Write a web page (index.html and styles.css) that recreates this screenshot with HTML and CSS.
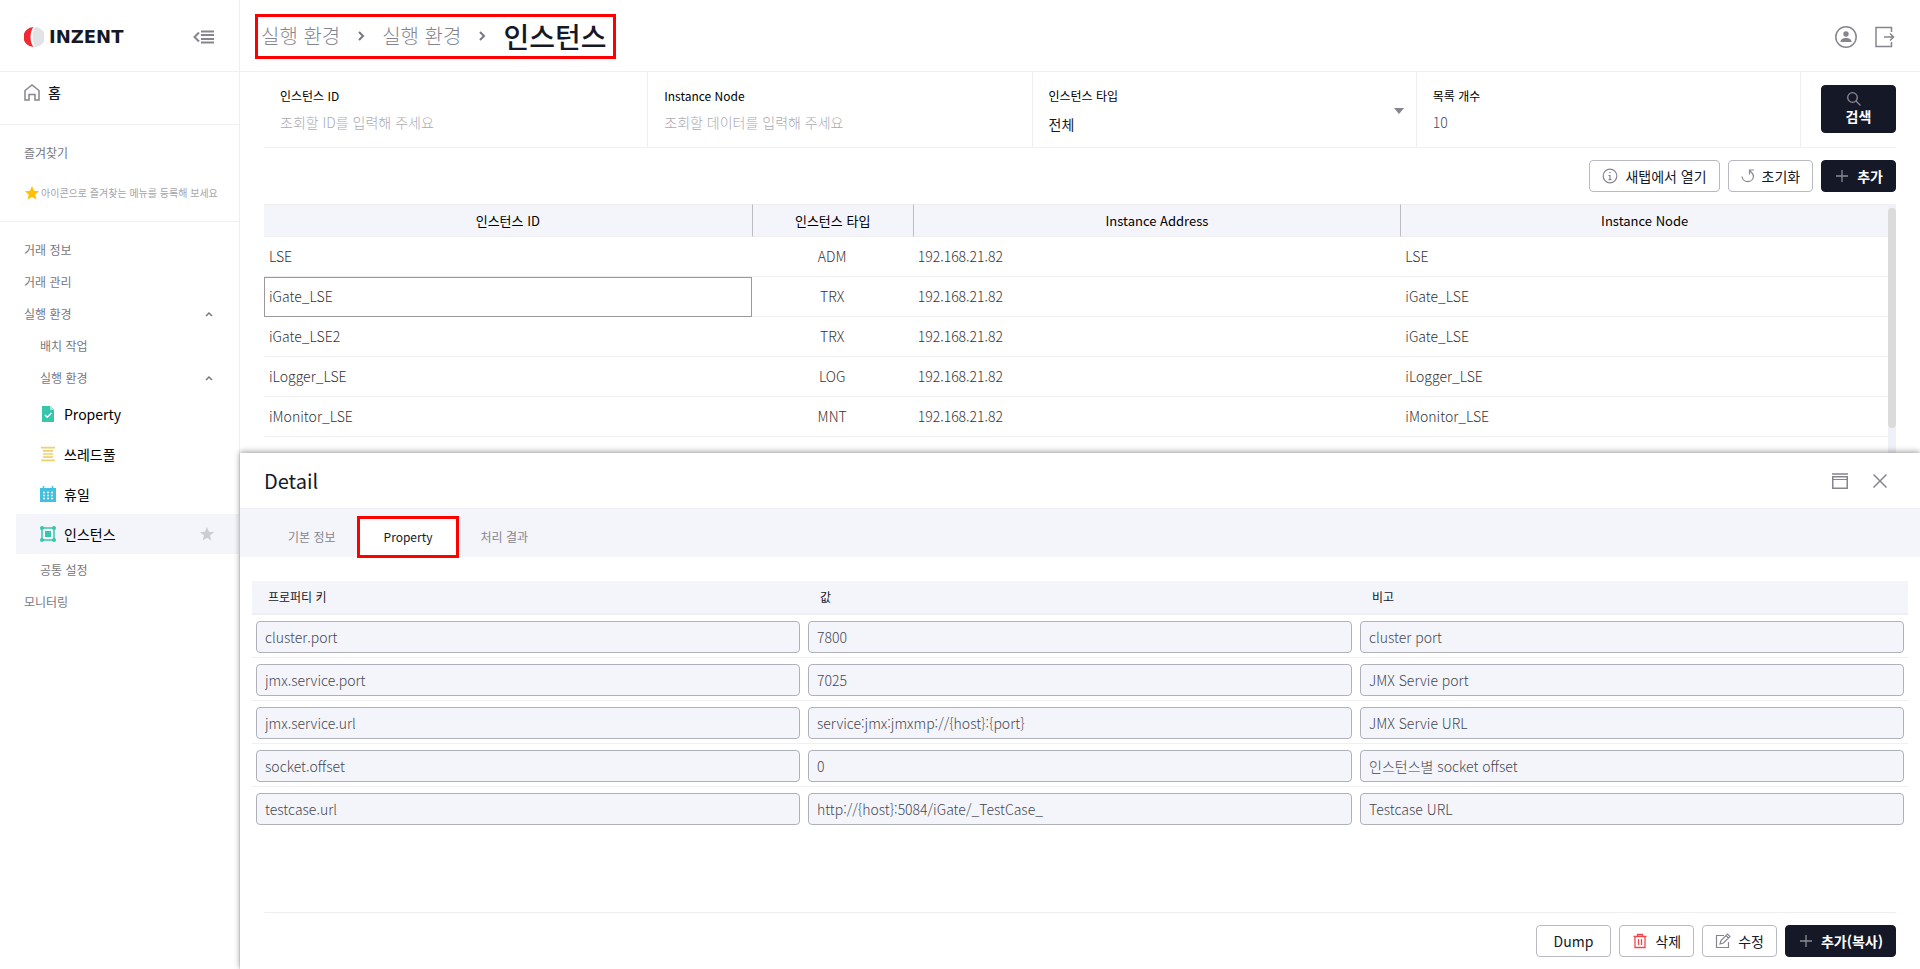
FILE: index.html
```html
<!DOCTYPE html>
<html lang="ko">
<head>
<meta charset="utf-8">
<title>인스턴스</title>
<link rel="stylesheet" href="styles.css">
</head>
<body>
<div class="app">
  <aside class="sidebar">
    <div class="brand">
      <a class="logo" href="#">
        <svg width="20" height="20" viewBox="0 0 20 20" aria-hidden="true"><path d="M11 0a10 10 0 0 1 0 20c-3-5-3-15 0-20z" fill="#e1e3e6"/><path d="M9.500 0a10 10 0 0 0 0 20C5.500 15 5.500 5 9.500 0z" fill="#ee2b34"/></svg>
        <span class="logo-text">INZENT</span>
      </a>
      <button class="icon-button" type="button" aria-label="메뉴 접기">
        <svg width="21" height="14" viewBox="0 0 21 14" fill="none" stroke="#85858f" stroke-width="2"><path d="M6 2.500L1.500 7 6 11.500M8 1.500h13M8 5h13M8 9h13M8 12.500h13"/></svg>
      </button>
    </div>
    <a class="home" href="#">
      <svg width="16" height="17" viewBox="0 0 16 17" fill="none" stroke="#85858f" stroke-width="1.500"><path d="M1 16V6.500L8 1l7 5.500V16h-4v-5.500H5V16z"/></svg>
      홈
    </a>
    <section class="favorites">
      <h2 class="favorites-title">즐겨찾기</h2>
      <p class="favorites-hint">
        <svg width="16" height="16" viewBox="0 0 16 16" fill="#ffc107"><path d="M8 1l2.100 4.700 5 .5-3.800 3.400 1.100 5L8 12.100l-4.400 2.500 1.100-5L.9 6.200l5-.5z"/></svg>
        아이콘으로 즐겨찾는 메뉴를 등록해 보세요
      </p>
    </section>
    <nav class="menu">
      <a class="menu-group" href="#">거래 정보</a>
      <a class="menu-group" href="#">거래 관리</a>
      <a class="menu-group" href="#">실행 환경
        <svg width="8" height="6" viewBox="0 0 8 6" fill="none" stroke="#777780" stroke-width="1.500"><path d="M1 5l3-3 3 3"/></svg>
      </a>
      <a class="menu-group nested" href="#">배치 작업</a>
      <a class="menu-group nested" href="#">실행 환경
        <svg width="8" height="6" viewBox="0 0 8 6" fill="none" stroke="#777780" stroke-width="1.500"><path d="M1 5l3-3 3 3"/></svg>
      </a>
      <a class="menu-item" href="#">
        <svg width="16" height="16" viewBox="0 0 16 16"><path d="M2 0h8l4 4v12H2z" fill="#37c5ab"/><path d="M10 0l4 4h-4z" fill="#a5e5d9"/><path d="M5 9l2.200 2.200L11.500 7" fill="none" stroke="#fff" stroke-width="1.400"/></svg>
        Property
      </a>
      <a class="menu-item" href="#">
        <svg width="16" height="16" viewBox="0 0 16 16" stroke="#f0cf6c" stroke-width="1.700"><path d="M1 1.700h14M3 4.900h10M3 8h10M3 11.100h10M1 14.300h14"/></svg>
        쓰레드풀
      </a>
      <a class="menu-item" href="#">
        <svg width="16" height="16" viewBox="0 0 16 16"><path d="M0 2h16v14H0z" fill="#41c1e0"/><path d="M3.500 0v4M12.500 0v4" stroke="#41c1e0" stroke-width="1.500"/><path d="M3 6.500h2M7 6.500h2M11 6.500h2M3 9.500h2M7 9.500h2M11 9.500h2M3 12.500h2M7 12.500h2M11 12.500h2" stroke="#fff" stroke-width="1.300"/></svg>
        휴일
      </a>
      <a class="menu-item active" href="#">
        <svg width="16" height="16" viewBox="0 0 16 16"><path d="M2 2h12v12H2z" fill="none" stroke="#37c5ab" stroke-width="1.500"/><path d="M5 5h6v6H5z" fill="#37c5ab"/><g fill="#37c5ab"><circle cx="2" cy="2" r="2"/><circle cx="14" cy="2" r="2"/><circle cx="2" cy="14" r="2"/><circle cx="14" cy="14" r="2"/></g></svg>
        인스턴스
        <svg class="star" width="14" height="14" viewBox="0 0 16 16" fill="#ccccd2"><path d="M8 0l2.200 5.500 5.800.4-4.500 3.800L13 15.500 8 12.300l-5 3.200 1.500-5.800L0 5.900l5.800-.4z"/></svg>
      </a>
      <a class="menu-group nested" href="#">공통 설정</a>
      <a class="menu-group" href="#">모니터링</a>
    </nav>
  </aside>

  <main class="main">
    <header class="topbar">
      <nav class="breadcrumb" aria-label="현재 위치">
        <span>실행 환경</span>
        <svg width="8" height="10" viewBox="0 0 8 10" fill="none" stroke="#777780" stroke-width="2"><path d="M2 1l4 4-4 4"/></svg>
        <span>실행 환경</span>
        <svg width="8" height="10" viewBox="0 0 8 10" fill="none" stroke="#777780" stroke-width="2"><path d="M2 1l4 4-4 4"/></svg>
        <h1>인스턴스</h1>
      </nav>
      <div class="account">
        <button class="icon-button" type="button" aria-label="사용자">
          <svg width="22" height="22" viewBox="0 0 22 22"><circle cx="11" cy="11" r="10.200" fill="none" stroke="#85858f" stroke-width="1.500"/><circle cx="11" cy="8" r="2.700" fill="#85858f"/><path d="M5.500 16c0-3 2.500-4 5.500-4s5.500 1 5.500 4z" fill="#85858f"/></svg>
        </button>
        <button class="icon-button" type="button" aria-label="로그아웃">
          <svg width="20" height="22" viewBox="0 0 20 22" fill="none" stroke="#85858f" stroke-width="1.500"><path d="M16.500 6V1.500H1v19h15.500V16M9 11h9.500M15 7.500l3.500 3.500-3.500 3.500"/></svg>
        </button>
      </div>
    </header>

    <form class="filters">
      <div class="field">
        <label for="f-id">인스턴스 ID</label>
        <input id="f-id" type="text" placeholder="조회할 ID를 입력해 주세요">
      </div>
      <div class="field">
        <label for="f-node">Instance Node</label>
        <input id="f-node" type="text" placeholder="조회할 데이터를 입력해 주세요">
      </div>
      <div class="field">
        <label for="f-type">인스턴스 타입</label>
        <select id="f-type"><option>전체</option></select>
        <svg class="caret" width="10" height="6" viewBox="0 0 10 6" fill="#85858f"><path d="M0 0h10L5 6z"/></svg>
      </div>
      <div class="field">
        <label for="f-count">목록 개수</label>
        <input id="f-count" type="text" value="10">
      </div>
      <div class="search">
        <button class="button dark search-button" type="button">
          <span class="search-stack">
            <svg width="15" height="14" viewBox="0 0 15 14" fill="none" stroke="#8a8c95" stroke-width="1.300"><circle cx="6.500" cy="5.500" r="4.800"/><path d="M10 9l4.500 4.500"/></svg>
            검색
          </span>
        </button>
      </div>
    </form>

    <div class="toolbar">
      <button class="button" type="button">
        <svg width="16" height="16" viewBox="0 0 16 16" fill="none" stroke="#85858f" stroke-width="1.200"><circle cx="8" cy="8" r="6.800"/><path d="M8 7v5M6.500 7.500H8M6.500 11.700h3M7.200 4.500h1.500"/></svg>
        새탭에서 열기
      </button>
      <button class="button" type="button">
        <svg width="14" height="16" viewBox="0 0 14 16" fill="none" stroke="#85858f" stroke-width="1.200"><path d="M1 8.500a5.800 5.800 0 0 0 11.500 0c0-2.500-1.500-4-3.500-5.500M13 2H8.500v4.500"/></svg>
        초기화
      </button>
      <button class="button dark" type="button">
        <svg width="16" height="16" viewBox="0 0 16 16" stroke="#8a8c95" stroke-width="1.300"><path d="M2 8h12M8 2v12"/></svg>
        추가
      </button>
    </div>

    <div class="list">
      <table class="grid">
        <colgroup><col><col class="col-type"><col><col></colgroup>
        <thead><tr><th>인스턴스 ID</th><th>인스턴스 타입</th><th>Instance Address</th><th>Instance Node</th></tr></thead>
        <tbody>
          <tr><td>LSE</td><td>ADM</td><td>192.168.21.82</td><td>LSE</td></tr>
          <tr><td class="selected">iGate_LSE</td><td>TRX</td><td>192.168.21.82</td><td>iGate_LSE</td></tr>
          <tr><td>iGate_LSE2</td><td>TRX</td><td>192.168.21.82</td><td>iGate_LSE</td></tr>
          <tr><td>iLogger_LSE</td><td>LOG</td><td>192.168.21.82</td><td>iLogger_LSE</td></tr>
          <tr><td>iMonitor_LSE</td><td>MNT</td><td>192.168.21.82</td><td>iMonitor_LSE</td></tr>
        </tbody>
      </table>
      <div class="scroll-track"><div class="scroll-thumb"></div></div>
    </div>

    <section class="detail">
      <header class="detail-header">
        <h2>Detail</h2>
        <div class="detail-actions">
          <button class="icon-button" type="button" aria-label="최대화">
            <svg width="16" height="16" viewBox="0 0 16 16" fill="none" stroke="#85858f"><path d="M0 1h16" stroke-width="1.500"/><path d="M.75 3.750h14.500v11.500H.75z" stroke-width="1.500"/><path d="M1 6.500h14"/></svg>
          </button>
          <button class="icon-button" type="button" aria-label="닫기">
            <svg width="14" height="14" viewBox="0 0 14 14" fill="none" stroke="#85858f" stroke-width="1.500"><path d="M.5.5l13 13M13.500.5l-13 13"/></svg>
          </button>
        </div>
      </header>
      <div class="tabs" role="tablist">
        <button class="tab" type="button" role="tab">기본 정보</button>
        <button class="tab active" type="button" role="tab" aria-selected="true">Property</button>
        <button class="tab" type="button" role="tab">처리 결과</button>
      </div>
      <div class="properties">
        <table class="property-table">
          <thead><tr><th>프로퍼티 키</th><th>값</th><th>비고</th></tr></thead>
          <tbody>
            <tr><td><input aria-label="프로퍼티 키" readonly value="cluster.port"></td><td><input aria-label="값" readonly value="7800"></td><td><input aria-label="비고" readonly value="cluster port"></td></tr>
            <tr><td><input aria-label="프로퍼티 키" readonly value="jmx.service.port"></td><td><input aria-label="값" readonly value="7025"></td><td><input aria-label="비고" readonly value="JMX Servie port"></td></tr>
            <tr><td><input aria-label="프로퍼티 키" readonly value="jmx.service.url"></td><td><input aria-label="값" readonly value="service:jmx:jmxmp://{host}:{port}"></td><td><input aria-label="비고" readonly value="JMX Servie URL"></td></tr>
            <tr><td><input aria-label="프로퍼티 키" readonly value="socket.offset"></td><td><input aria-label="값" readonly value="0"></td><td><input aria-label="비고" readonly value="인스턴스별 socket offset"></td></tr>
            <tr><td><input aria-label="프로퍼티 키" readonly value="testcase.url"></td><td><input aria-label="값" readonly value="http://{host}:5084/iGate/_TestCase_"></td><td><input aria-label="비고" readonly value="Testcase URL"></td></tr>
          </tbody>
        </table>
      </div>
      <footer class="detail-footer">
        <button class="button wide" type="button">Dump</button>
        <button class="button" type="button">
          <svg width="16" height="16" viewBox="0 0 16 16" fill="none" stroke="#f0474c" stroke-width="1.300"><path d="M1.500 3.500h13M5.500 3V1.500h5V3M3 4v10.500h10V4M6.500 6v6M9.500 6v6"/></svg>
          삭제
        </button>
        <button class="button" type="button">
          <svg width="16" height="16" viewBox="0 0 16 16" fill="none" stroke="#85858f" stroke-width="1.200"><path d="M9 2.500H1.500v12h12V9M5 11l1-3.500L12.500 1 15 3.500 8.500 10zM11 2.500L13.500 5"/></svg>
          수정
        </button>
        <button class="button dark" type="button">
          <svg width="16" height="16" viewBox="0 0 16 16" stroke="#8a8c95" stroke-width="1.300"><path d="M2 8h12M8 2v12"/></svg>
          추가(복사)
        </button>
      </footer>
    </section>
  </main>
</div>
</body>
</html>
```
FILE: styles.css
```css
* { box-sizing: border-box; }

body {
  margin: 0;
  background: #fff;
  color: #151826;
  font: 14px/20px "Noto Sans CJK KR", sans-serif;
}

h1, h2, p { margin: 0; font-weight: 400; }
a { color: inherit; text-decoration: none; }
button, input, select { font: inherit; color: inherit; }
svg { display: block; flex: none; }

.app { display: flex; height: 100vh; }

/* Sidebar */
.sidebar { flex: none; width: 240px; border-right: 1px solid #eeeef3; }
.brand {
  display: flex;
  align-items: center;
  justify-content: space-between;
  height: 72px;
  padding: 2px 25px 0 24px;
  border-bottom: 1px solid #eeeef3;
}
.logo { display: flex; align-items: center; gap: 5px; }
.logo-text { font: bold 18px/20px "DejaVu Sans", sans-serif; }
.icon-button { padding: 0; border: 0; background: none; }
.home {
  display: flex;
  align-items: center;
  gap: 8px;
  height: 53px;
  padding: 0 24px 12px;
  border-bottom: 1px solid #eeeef3;
  font-weight: 500;
}
.favorites { padding: 18px 0 18px 24px; border-bottom: 1px solid #eeeef3; }
.favorites-title { color: #777780; font-size: 12px; }
.favorites-hint {
  display: flex;
  align-items: center;
  gap: 1px;
  padding-top: 20px;
  color: #a5a5ab;
  font-size: 10px;
  white-space: nowrap;
}
.menu { padding: 12px 0 0 16px; }
.menu-group {
  display: flex;
  align-items: center;
  justify-content: space-between;
  height: 32px;
  padding: 0 26px 0 8px;
  color: #777780;
  font-size: 12px;
}
.menu-group.nested { padding-left: 24px; }
.menu-item {
  display: flex;
  align-items: center;
  gap: 8px;
  height: 40px;
  padding: 0 25px 0 24px;
  color: #000;
}
.menu-item.active { background: #f4f5fb; }
.star { margin-left: auto; }

/* Top bar */
.main { display: flex; flex: 1; flex-direction: column; min-width: 0; }
.topbar {
  display: flex;
  align-items: center;
  justify-content: space-between;
  flex: none;
  height: 72px;
  padding: 2px 25px 0 15px;
  border-bottom: 1px solid #eeeef3;
}
.breadcrumb {
  display: flex;
  align-items: center;
  gap: 17px;
  height: 45px;
  padding: 0 7px 2px 3px;
  border: 3px solid #f00;
  color: #85858f;
  font-size: 20px;
  font-weight: 300;
}
.breadcrumb h1 { color: #151826; font-size: 28px; font-weight: 500; }
.account { display: flex; align-items: center; gap: 18px; }

/* Filters */
.filters {
  display: flex;
  flex: none;
  height: 76px;
  margin: 0 24px;
  border-bottom: 1px solid #eeeef3;
}
.field {
  position: relative;
  display: flex;
  flex: 1;
  flex-direction: column;
  gap: 4px;
  padding: 14px 16px 0;
  border-right: 1px solid #eeeef3;
}
.field label { color: #000; font-size: 12px; }
.field input, .field select {
  width: 100%;
  height: 24px;
  padding: 0;
  border: 0;
  outline: 0;
  background: none;
  appearance: none;
}
.field input { color: #444751; font-weight: 300; }
.field select { height: 28px; }
.field ::placeholder { color: #aaaab2; opacity: 1; }
.caret { position: absolute; top: 36px; right: 12px; pointer-events: none; }
.search { padding: 13px 0 0 20px; }

/* Buttons */
.button {
  display: inline-flex;
  align-items: center;
  justify-content: center;
  gap: 7px;
  height: 32px;
  padding: 0 12px;
  border: 1px solid #b9b9c3;
  border-radius: 4px;
  background: #fff;
  white-space: nowrap;
}
.button.dark { border-color: #151826; background: #151826; color: #fff; font-weight: 700; }
.button.wide { padding: 0 17px; }
.search-button { width: 75px; height: 48px; }
.search-stack { display: grid; line-height: 20px; }
.toolbar {
  display: flex;
  flex: none;
  justify-content: flex-end;
  gap: 8px;
  padding: 12px 24px;
}

/* Instance list */
.list { display: flex; flex: 1; min-height: 0; margin: 0 24px; overflow: hidden; }
.grid {
  flex: 1;
  width: 100%;
  height: 0;
  border-spacing: 0;
  table-layout: fixed;
}
.col-type { width: 161px; }
.grid th {
  height: 33px;
  padding: 0;
  border: solid #eeeef0;
  border-width: 1px 0;
  background: #f4f5fb;
  color: #000;
  font-size: 13px;
  font-weight: 400;
}
.grid th + th { border-left: 1px solid #bcbcc2; }
.grid td {
  height: 40px;
  padding: 0 5px 2px;
  border-bottom: 1px solid #eee;
  color: #333;
  font-weight: 300;
}
.grid td:nth-child(2) { text-align: center; }
.grid td.selected { padding: 0 4px 2px; border: 1px solid #999; }
.scroll-track { flex: none; width: 8px; padding-top: 4px; background: #f0f1f8; }
.scroll-thumb { height: 220px; border-radius: 4px; background: #dbdbdb; }

/* Detail panel */
.detail {
  z-index: 1;
  display: flex;
  flex: none;
  flex-direction: column;
  background: #fff;
  box-shadow: 0 -1px 6px rgba(0, 0, 0, .4);
}
.detail-header {
  display: flex;
  align-items: center;
  justify-content: space-between;
  height: 56px;
  padding: 0 33px 0 24px;
  border-bottom: 1px solid #eeeef3;
}
.detail-header h2 { font-size: 20px; }
.detail-actions { display: flex; align-items: center; gap: 25px; }
.tabs { display: flex; align-items: center; height: 48px; padding: 8px 24px 0; background: #f4f5fb; }
.tab {
  height: 36px;
  padding: 0 24px;
  border: 0;
  background: none;
  color: #85858f;
  font-size: 12px;
}
.tab.active { outline: 3px solid #f00; background: #fff; color: #151826; }
.properties { min-height: 355px; padding: 24px 12px 0; }
.property-table { width: 100%; border-spacing: 0; table-layout: fixed; }
.property-table th {
  height: 34px;
  padding: 0 16px;
  border-bottom: 2px solid #eeeef5;
  background: #f4f5fb;
  font-size: 12px;
  font-weight: 400;
  text-align: left;
}
.property-table td { padding: 6px 4px 4px; border-bottom: 1px solid #eeeef3; }
.property-table tr:last-child td { border-bottom: 0; }
.property-table input {
  display: block;
  width: 100%;
  height: 32px;
  padding: 0 8px;
  border: 1px solid #b0b0ba;
  border-radius: 4px;
  background: #f4f5fb;
  color: #444751;
  font-weight: 300;
}
.detail-footer {
  display: flex;
  justify-content: flex-end;
  gap: 8px;
  margin: 0 24px;
  padding: 12px 0;
  border-top: 1px solid #eeeef3;
}
```
